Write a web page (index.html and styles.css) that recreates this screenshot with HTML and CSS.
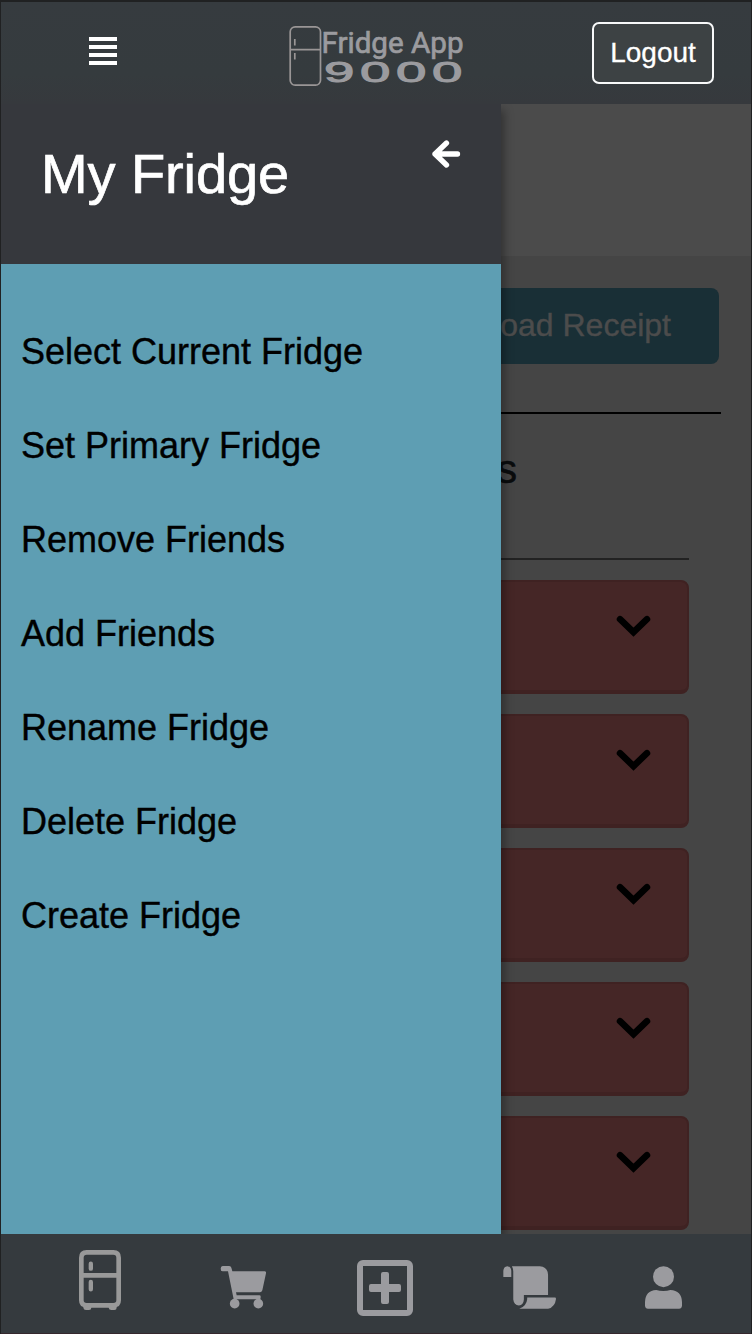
FILE: index.html
```html
<!DOCTYPE html>
<html lang="en">
<head>
<meta charset="utf-8">
<title>Fridge App 9000</title>
<link rel="stylesheet" href="styles.css">
</head>
<body>
<div class="app">
  <header class="topbar">
    <svg class="menu-icon" viewBox="0 0 28 28"><path d="M0 0h28v4H0zM0 8h28v4H0zM0 16h28v4H0zM0 24h28v4H0z"/></svg>
    <svg class="logo" viewBox="0 0 180 62">
      <g fill="none" stroke="#9a9696" stroke-width="1.7">
        <rect x="2.200" y="1.800" width="30.3" height="58.4" rx="5"/>
        <path d="M2 24.600h30M6.800 14v6.500M6.800 28v6.500"/>
      </g>
      <text class="logo-name" x="33.500" y="28" textLength="142" lengthAdjust="spacingAndGlyphs">Fridge App</text>
      <text class="logo-number" transform="translate(35.900 57) scale(1.850 1)" x="0" y="0" textLength="74.800" lengthAdjust="spacing">9000</text>
    </svg>
    <button class="logout">Logout</button>
  </header>
  <main class="stage">
    <div class="page">
      <div class="banner"></div>
      <div class="content">
        <button class="upload">Upload Receipt</button>
        <h2 class="heading">Ingredients</h2>
        <ul class="cards">
          <li class="card"><svg class="chevron" viewBox="0 0 36 24"><path d="M4 4.200l13.500 13L31 4.200"/></svg></li>
          <li class="card"><svg class="chevron" viewBox="0 0 36 24"><path d="M4 4.200l13.500 13L31 4.200"/></svg></li>
          <li class="card"><svg class="chevron" viewBox="0 0 36 24"><path d="M4 4.200l13.500 13L31 4.200"/></svg></li>
          <li class="card"><svg class="chevron" viewBox="0 0 36 24"><path d="M4 4.200l13.500 13L31 4.200"/></svg></li>
          <li class="card"><svg class="chevron" viewBox="0 0 36 24"><path d="M4 4.200l13.500 13L31 4.200"/></svg></li>
        </ul>
      </div>
    </div>
    <aside class="drawer">
      <div class="drawer-head">
        <h1 class="drawer-title">My Fridge</h1>
        <svg class="back" viewBox="0 0 30 28"><path d="M15.500 3L4 14l11.500 11M4 14h22.500"/></svg>
      </div>
      <nav class="drawer-nav">
        <a>Select Current Fridge</a>
        <a>Set Primary Fridge</a>
        <a>Remove Friends</a>
        <a>Add Friends</a>
        <a>Rename Fridge</a>
        <a>Delete Fridge</a>
        <a>Create Fridge</a>
      </nav>
    </aside>
  </main>
  <footer class="tabs">
    <svg class="tab-fridge" viewBox="57 60 126 180">
      <path fill="none" stroke="#999" stroke-width="14" d="M80 67h80q16 0 16 16v128q0 15-16 15H80q-16 0-16-15V83q0-16 16-16zM64 136h112"/>
      <path fill="none" stroke="#999" stroke-width="13" stroke-linecap="round" d="M92.500 101v15M92.500 156v22"/>
      <path fill="#999" d="M70 228h24v5q0 7-7 7h-9q-7 0-8-7zM146 228h24v5q0 7-7 7h-9q-7 0-8-7z"/>
    </svg>
    <svg class="tab-cart" viewBox="477 108 141 129">
      <path d="M484 108h24q6 0 7 8l2 8h97q5 1 4 6l-11 51q-2 6-7 6h-72l2 9h68q5 0 4 6l-1 6h-80l-17-84h-16q-6 0-6-8t6-8z"/>
      <circle cx="524" cy="221" r="14.500"/>
      <circle cx="595" cy="221" r="14.500"/>
    </svg>
    <svg class="tab-add" viewBox="0 0 56 56">
      <rect x="3" y="3" width="50" height="50" rx="3" fill="none" stroke="#9b9b9f" stroke-width="6"/>
      <path d="M26 12h4q2 0 2 2v10h10q2 0 2 2v4q0 2-2 2H32v10q0 2-2 2h-4q-2 0-2-2V32H14q-2 0-2-2v-4q0-2 2-2h10V14q0-2 2-2z"/>
    </svg>
    <svg class="tab-scroll" viewBox="488 108 160 129">
      <path d="M489 141v-19q1-13 12-14 11 1 12 14v19zM518 108h81q24 2 25 26v61h-73v14q-1 17-15 18-15-1-17-18v-84q0-10-4-17zM561 203h84q3 0 3 4-3 24-24 30h-87q22-8 24-29z"/>
    </svg>
    <svg class="tab-user" viewBox="135 138 111 129">
      <circle cx="190.500" cy="170" r="31.500"/>
      <path d="M169 210q9 3 21 3t21-3q34 2 35 36v11q-1 9-9 9h-93q-8 0-9-9v-11q1-34 34-36z"/>
    </svg>
  </footer>
</div>
</body>
</html>
```

FILE: styles.css
```css
* { box-sizing: border-box; }
body {
  margin: 0;
  background: #202122;
  font-family: "Liberation Sans", Arial, sans-serif;
}
.app {
  width: 752px;
  height: 1334px;
  padding: 2px 1px 0;
  display: flex;
  flex-direction: column;
  overflow: hidden;
}
button {
  font-family: inherit;
  margin: 0;
}
.topbar {
  height: 102px;
  flex: none;
  display: flex;
  align-items: flex-start;
  background: linear-gradient(#363b3f, #353b3e 70%, #36393d);
}
.menu-icon {
  width: 28px;
  height: 28px;
  margin: 35px 0 0 88px;
  fill: #fff;
}
.logo {
  width: 180px;
  height: 62px;
  margin: 23px 0 0 171px;
}
.logo-name {
  font: 400 30px Roboto, sans-serif;
  fill: #9b9b9f;
  stroke: #9b9b9f;
  stroke-width: .7px;
}
.logo-number {
  font: 400 29.5px "Liberation Sans", sans-serif;
  fill: #9b9b9f;
  stroke: #9b9b9f;
  stroke-width: 1px;
}
.logout {
  width: 122px;
  height: 62px;
  margin: 20px 0 0 124px;
  padding: 0;
  border: 2px solid #f8f9fa;
  border-radius: 7px;
  background: #3d4244;
  color: #fff;
  font-size: 28px;
  -webkit-text-stroke: .3px;
}
.stage {
  position: relative;
  height: 1130px;
  flex: none;
  overflow: hidden;
}
.page {
  height: 100%;
  background: #454545;
  overflow: hidden;
}
.banner {
  height: 152px;
  background: #4b4b4b;
}
.content {
  padding: 32px 30px 0 32px;
}
.upload {
  display: block;
  width: 300px;
  height: 76px;
  margin: 0 2px 48px auto;
  padding: 0 48px 2px 0;
  border: 0;
  border-radius: 8px;
  background: #192f36;
  color: #4c4c4c;
  font-size: 32px;
  text-align: right;
  -webkit-text-stroke: .4px;
}
.heading {
  position: relative;
  width: 688px;
  height: 148px;
  margin: 0 0 20px;
  padding: 32px 204px 0 0;
  border-top: 2px solid #000;
  color: #0a0c0d;
  font-size: 40px;
  line-height: 46px;
  font-weight: 500;
  text-align: right;
  -webkit-text-stroke: .6px;
}
.heading::after {
  content: "";
  position: absolute;
  left: 0;
  right: 32px;
  bottom: 0;
  height: 2px;
  background: #222;
}
.cards {
  list-style: none;
  margin: 0 32px 0 0;
  padding: 0;
  display: grid;
  gap: 20px;
}
.card {
  height: 114px;
  display: flex;
  justify-content: flex-end;
  padding: 33px 35px 0 0;
  border: 2px solid #3f2222;
  border-bottom-width: 4px;
  border-radius: 8px;
  background: #452626;
}
.chevron {
  width: 36px;
  height: 24px;
  fill: none;
  stroke: #000;
  stroke-width: 6.5;
  stroke-linecap: round;
}
.drawer {
  position: absolute;
  left: 0;
  top: 0;
  width: 500px;
  height: 1130px;
  display: flex;
  flex-direction: column;
  background: #5e9eb3;
  box-shadow: 3px 6px 9px rgba(0, 0, 0, .35);
}
.drawer-head {
  height: 160px;
  padding: 36px 40px 0 40px;
  display: flex;
  justify-content: space-between;
  align-items: flex-start;
  background: #36383d;
}
.drawer-title {
  margin: 0;
  color: #fff;
  font-size: 56px;
  line-height: 68px;
  font-weight: 400;
  letter-spacing: -.1px;
  -webkit-text-stroke: .7px;
}
.back {
  width: 30px;
  height: 28px;
  fill: none;
  stroke: #fff;
  stroke-width: 5.3;
  stroke-linecap: round;
  stroke-linejoin: round;
}
.drawer-nav {
  display: flex;
  flex-direction: column;
  padding: 41px 20px;
  color: #000;
  font-size: 36px;
  line-height: 94px;
  -webkit-text-stroke: .4px;
}
.tabs {
  height: 100px;
  flex: none;
  display: flex;
  align-items: flex-start;
  background: #353a3e;
  border-bottom: 1px solid #35282d;
  fill: #9b9b9f;
}
.tabs svg { flex: none; }
.tab-fridge { width: 42px; height: 60px; margin: 16px 0 0 78px; }
.tab-cart { width: 47px; height: 43px; margin: 32px 0 0 98px; }
.tab-add { width: 56px; height: 56px; margin: 26px 0 0 91px; }
.tab-scroll { width: 53px; height: 43px; margin: 32px 0 0 90px; }
.tab-user { width: 37px; height: 43px; margin: 32px 0 0 89px; }
```
